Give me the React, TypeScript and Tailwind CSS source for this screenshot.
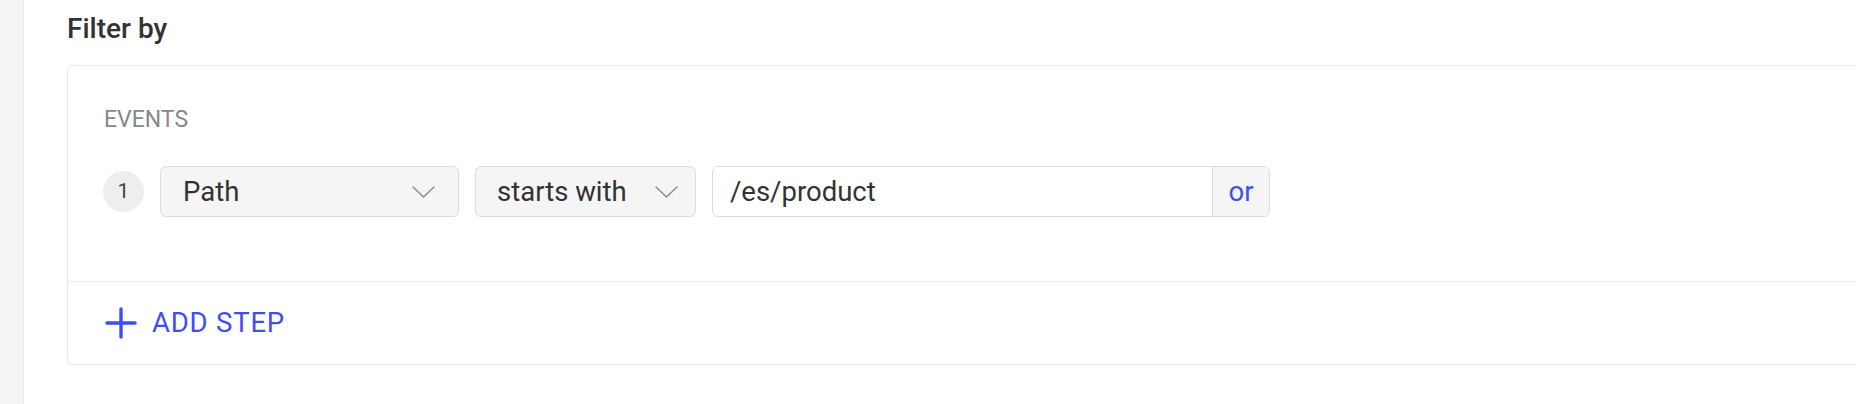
import React from "react";

const Chevron = () => (
  <svg width="23" height="12" viewBox="0 0 23 12" fill="none">
    <path d="M1 1 L11.5 11 L22 1" stroke="#8c8c8c" strokeWidth="1.5" strokeLinecap="round" strokeLinejoin="round" />
  </svg>
);

export default function App() {
  const font = { fontFamily: "Roboto, 'Noto Sans', Arial, sans-serif" };
  return (
    <div className="flex w-full h-[404px] bg-white overflow-hidden" style={font}>
      <div className="w-[24px] shrink-0 bg-[#f5f5f5] border-r border-[#ececec]" />
      <div className="flex-1 min-w-0 pl-[43px] pt-[12px]">
        <div className="text-[28px] leading-[34px] font-medium text-[#333333]">Filter by</div>
        <div className="mt-[19px] border border-r-0 border-[#e8e8e8] rounded-l-[6px] w-[calc(100%+10px)]">
          <div className="pt-[41px] pb-[64px] pl-[35px]">
            <div className="pl-[1px] text-[23px] leading-[26px] text-[#888888]">EVENTS</div>
            <div className="mt-[33px] flex items-center gap-4">
              <div className="w-[41px] h-[41px] rounded-full bg-[#eeeeee] flex items-center justify-center text-[21px] text-[#444444]">
                1
              </div>
              <div className="w-[299px] h-[51px] border border-[#dcdcdc] bg-[#f5f5f5] rounded-[6px] pl-[22px] pr-[23px] flex items-center justify-between">
                <span className="text-[27.5px] text-[#333333]">Path</span>
                <Chevron />
              </div>
              <div className="w-[221px] h-[51px] border border-[#dcdcdc] bg-[#f5f5f5] rounded-[6px] pl-[21px] pr-[17px] flex items-center justify-between">
                <span className="text-[27.5px] text-[#333333]">starts with</span>
                <Chevron />
              </div>
              <div className="w-[558px] h-[51px] border border-[#dcdcdc] rounded-[6px] flex overflow-hidden">
                <div className="flex-1 bg-white pl-[17px] flex items-center">
                  <span className="text-[27.5px] text-[#333333]">/es/product</span>
                </div>
                <div className="w-[57px] border-l border-[#dcdcdc] bg-[#f5f5f5] flex items-center justify-center">
                  <span className="text-[27.5px] text-[#3d4ef2]">or</span>
                </div>
              </div>
            </div>
          </div>
          <div className="border-t border-[#e8e8e8] h-[83px] flex items-center pl-[37px]">
            <svg width="32" height="32" viewBox="0 0 32 32" fill="none">
              <path d="M16 2 V30 M2 16 H30" stroke="#3d4ef2" strokeWidth="3.4" strokeLinecap="round" />
            </svg>
            <span className="ml-[15px] text-[27.5px] tracking-[0.8px] text-[#3d4ef2]">ADD STEP</span>
          </div>
        </div>
      </div>
    </div>
  );
}
